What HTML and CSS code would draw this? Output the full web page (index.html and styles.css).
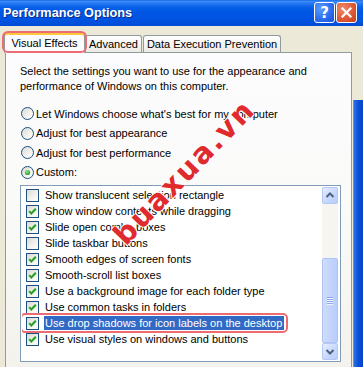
FILE: index.html
```html
<!DOCTYPE html>
<html>
<head>
<meta charset="utf-8">
<title>Performance Options</title>
<link rel="stylesheet" href="styles.css">
</head>
<body>
<svg class="defs" width="0" height="0" aria-hidden="true">
  <defs>
    <linearGradient id="ctl" x1="0" y1="0" x2="1" y2="1">
      <stop offset="0" stop-color="#D8D7CF"/>
      <stop offset="0.6" stop-color="#F4F3EE"/>
      <stop offset="1" stop-color="#FFFFFF"/>
    </linearGradient>
    <radialGradient id="dot" cx="0.4" cy="0.35" r="0.7">
      <stop offset="0" stop-color="#8BE58B"/>
      <stop offset="1" stop-color="#1E9A1E"/>
    </radialGradient>
  </defs>
</svg>
<div class="window">
  <div class="titlebar">
    <span class="title">Performance Options</span>
    <div class="caption-buttons">
      <span class="cbtn help">?</span>
      <span class="cbtn close"><svg width="13" height="13" viewBox="0 0 13 13"><path d="M2.5 2.5 L10.5 10.5 M10.5 2.5 L2.5 10.5" stroke="#fff" stroke-width="2.2" stroke-linecap="square"/></svg></span>
    </div>
  </div>
  <div class="client">
    <div class="tabs">
      <div class="tab active">Visual Effects</div>
      <div class="tab adv">Advanced</div>
      <div class="tab dep">Data Execution Prevention</div>
    </div>
    <div class="panel">
      <p class="intro">Select the settings you want to use for the appearance and<br>performance of Windows on this computer.</p>
      <ul class="radios">
        <li class="radio"><svg class="rb" width="13" height="13" viewBox="0 0 13 13"><circle cx="6.5" cy="6.5" r="6" fill="url(#ctl)" stroke="#1C5180"/></svg><span>Let Windows choose what's best for my computer</span></li>
        <li class="radio"><svg class="rb" width="13" height="13" viewBox="0 0 13 13"><circle cx="6.5" cy="6.5" r="6" fill="url(#ctl)" stroke="#1C5180"/></svg><span>Adjust for best appearance</span></li>
        <li class="radio"><svg class="rb" width="13" height="13" viewBox="0 0 13 13"><circle cx="6.5" cy="6.5" r="6" fill="url(#ctl)" stroke="#1C5180"/></svg><span>Adjust for best performance</span></li>
        <li class="radio"><svg class="rb" width="13" height="13" viewBox="0 0 13 13"><circle cx="6.5" cy="6.5" r="6" fill="url(#ctl)" stroke="#1C5180"/><circle cx="6.5" cy="6.5" r="2.6" fill="url(#dot)"/></svg><span>Custom:</span></li>
      </ul>
      <div class="listbox">
        <ul class="items">
          <li class="item"><svg class="cb" width="13" height="13" viewBox="0 0 13 13"><rect x="0.5" y="0.5" width="12" height="12" fill="url(#ctl)" stroke="#1C5180"/></svg><span class="label">Show translucent selection rectangle</span></li>
          <li class="item"><svg class="cb" width="13" height="13" viewBox="0 0 13 13"><rect x="0.5" y="0.5" width="12" height="12" fill="url(#ctl)" stroke="#1C5180"/><polyline points="3.2,6.2 5.3,8.5 9.8,3.8" fill="none" stroke="#21A121" stroke-width="2"/></svg><span class="label">Show window contents while dragging</span></li>
          <li class="item"><svg class="cb" width="13" height="13" viewBox="0 0 13 13"><rect x="0.5" y="0.5" width="12" height="12" fill="url(#ctl)" stroke="#1C5180"/><polyline points="3.2,6.2 5.3,8.5 9.8,3.8" fill="none" stroke="#21A121" stroke-width="2"/></svg><span class="label">Slide open combo boxes</span></li>
          <li class="item"><svg class="cb" width="13" height="13" viewBox="0 0 13 13"><rect x="0.5" y="0.5" width="12" height="12" fill="url(#ctl)" stroke="#1C5180"/></svg><span class="label">Slide taskbar buttons</span></li>
          <li class="item"><svg class="cb" width="13" height="13" viewBox="0 0 13 13"><rect x="0.5" y="0.5" width="12" height="12" fill="url(#ctl)" stroke="#1C5180"/><polyline points="3.2,6.2 5.3,8.5 9.8,3.8" fill="none" stroke="#21A121" stroke-width="2"/></svg><span class="label">Smooth edges of screen fonts</span></li>
          <li class="item"><svg class="cb" width="13" height="13" viewBox="0 0 13 13"><rect x="0.5" y="0.5" width="12" height="12" fill="url(#ctl)" stroke="#1C5180"/><polyline points="3.2,6.2 5.3,8.5 9.8,3.8" fill="none" stroke="#21A121" stroke-width="2"/></svg><span class="label">Smooth-scroll list boxes</span></li>
          <li class="item"><svg class="cb" width="13" height="13" viewBox="0 0 13 13"><rect x="0.5" y="0.5" width="12" height="12" fill="url(#ctl)" stroke="#1C5180"/><polyline points="3.2,6.2 5.3,8.5 9.8,3.8" fill="none" stroke="#21A121" stroke-width="2"/></svg><span class="label">Use a background image for each folder type</span></li>
          <li class="item"><svg class="cb" width="13" height="13" viewBox="0 0 13 13"><rect x="0.5" y="0.5" width="12" height="12" fill="url(#ctl)" stroke="#1C5180"/><polyline points="3.2,6.2 5.3,8.5 9.8,3.8" fill="none" stroke="#21A121" stroke-width="2"/></svg><span class="label">Use common tasks in folders</span></li>
          <li class="item selected"><svg class="cb" width="13" height="13" viewBox="0 0 13 13"><rect x="0.5" y="0.5" width="12" height="12" fill="url(#ctl)" stroke="#1C5180"/><polyline points="3.2,6.2 5.3,8.5 9.8,3.8" fill="none" stroke="#21A121" stroke-width="2"/></svg><span class="label">Use drop shadows for icon labels on the desktop</span></li>
          <li class="item"><svg class="cb" width="13" height="13" viewBox="0 0 13 13"><rect x="0.5" y="0.5" width="12" height="12" fill="url(#ctl)" stroke="#1C5180"/><polyline points="3.2,6.2 5.3,8.5 9.8,3.8" fill="none" stroke="#21A121" stroke-width="2"/></svg><span class="label">Use visual styles on windows and buttons</span></li>
        </ul>
        <div class="scrollbar">
          <div class="sb-btn"><svg width="14" height="15" viewBox="0 0 14 15"><path d="M3.5 9 L7 5.5 L10.5 9" fill="none" stroke="#4D6185" stroke-width="2"/></svg></div>
          <div class="sb-track"></div>
          <div class="sb-thumb"><svg width="8" height="8" viewBox="0 0 8 8"><path d="M1 0.5 H7 M1 2.5 H7 M1 4.5 H7 M1 6.5 H7" stroke="#8FA9E6" stroke-width="1"/><path d="M1 1.5 H7 M1 3.5 H7 M1 5.5 H7 M1 7.5 H7" stroke="#EEF3FE" stroke-width="1"/></svg></div>
          <div class="sb-btn"><svg width="14" height="15" viewBox="0 0 14 15"><path d="M3.5 6 L7 9.5 L10.5 6" fill="none" stroke="#4D6185" stroke-width="2"/></svg></div>
        </div>
      </div>
    </div>
    <div class="behind"></div>
  </div>
  <div class="watermark">buaxua.vn</div>
</div>
</body>
</html>
```
FILE: styles.css
```css
html, body {
  margin: 0;
  padding: 0;
}
body {
  width: 363px;
  height: 367px;
  overflow: hidden;
  background: #ECE9D8;
  font-family: "Liberation Sans", Arial, sans-serif;
  font-size: 11px;
  color: #000;
}
.defs {
  position: absolute;
}
.window {
  position: relative;
  width: 363px;
  height: 367px;
  display: flex;
  flex-direction: column;
  overflow: hidden;
}
.titlebar {
  flex: none;
  height: 26px;
  box-sizing: border-box;
  display: flex;
  align-items: center;
  justify-content: space-between;
  padding: 0 6px 1px 3px;
  background: linear-gradient(to bottom, #0A5DDF 0, #3C8EF8 1px, #2A7BF3 3px, #0862E8 7px, #0056E3 12px, #0053E0 20px, #004CD6 26px);
}
.title {
  color: #fff;
  font-weight: bold;
  font-size: 12.7px;
  text-shadow: 1px 1px 0 #0C2A8A;
}
.caption-buttons {
  display: flex;
  gap: 1px;
}
.cbtn {
  box-sizing: border-box;
  width: 21px;
  height: 21px;
  border: 1px solid #fff;
  border-radius: 3px;
  display: flex;
  align-items: center;
  justify-content: center;
}
.help {
  background: radial-gradient(circle at 30% 30%, #5A9BFF 0, #2D6FF0 55%, #1B4FD8 100%);
  color: #fff;
  font-weight: bold;
  font-size: 15px;
  font-family: "DejaVu Sans", sans-serif;
}
.close {
  background: radial-gradient(circle at 30% 30%, #F08A6A 0, #E05A36 55%, #C8401C 100%);
}
.client {
  position: relative;
  flex: 1;
  display: flex;
  flex-direction: column;
  padding-top: 6px;
}
.behind {
  position: absolute;
  right: 0;
  top: 74px;
  bottom: 0;
  width: 9px;
  border-left: 1px solid #7A8AA8;
  background: linear-gradient(to right, #2A6FE8, #0A4FD8 50%, #0543C8);
}
.tabs {
  position: relative;
  z-index: 1;
  height: 20px;
  display: flex;
  align-items: flex-end;
  padding-left: 4px;
}
.tab {
  box-sizing: border-box;
  height: 17px;
  border: 1px solid #919B9C;
  border-bottom: none;
  border-radius: 3px 3px 0 0;
  background: linear-gradient(to bottom, #FFFFFF, #ECEBE6);
  text-align: center;
  line-height: 16px;
}
.tab.active {
  position: relative;
  width: 81px;
  height: 21px;
  margin-bottom: -1px;
  background: #FCFCFE;
  border-top: 1px solid #E68B2C;
  box-shadow: inset 0 2px 0 #FFC73C;
  line-height: 20px;
}
.tab.active::after {
  content: "";
  position: absolute;
  left: -3px;
  right: -3px;
  top: -2px;
  bottom: 0;
  border: 2px solid #EB6D73;
  border-radius: 6px;
}
.tab.adv {
  width: 57px;
}
.tab.dep {
  width: 138px;
  margin-left: 1px;
}
.panel {
  flex: 1;
  box-sizing: border-box;
  width: 347px;
  margin-left: 5px;
  border: 1px solid #919B9C;
  border-bottom: none;
  background: linear-gradient(to bottom, #FCFCFE 0, #FAFAF8 50%, #F3F2EC 100%);
  padding: 11px 0 0 14px;
}
.intro {
  margin: 0;
  line-height: 15px;
}
.radios {
  list-style: none;
  margin: 10px 0 0 0;
  padding: 0 0 0 1px;
}
.radio {
  height: 19.5px;
  display: flex;
  align-items: center;
  gap: 2px;
}
.rb {
  flex: none;
}
.listbox {
  box-sizing: border-box;
  width: 321px;
  height: 177px;
  margin-top: 3px;
  border: 1px solid #7F9DB9;
  background: #fff;
  padding: 1px;
  display: flex;
}
.items {
  flex: 1;
  list-style: none;
  margin: 0;
  padding: 0;
  overflow: hidden;
}
.item {
  position: relative;
  height: 16px;
  display: flex;
  align-items: center;
  padding-left: 4px;
  white-space: nowrap;
}
.cb {
  flex: none;
  margin-right: 5px;
}
.label {
  line-height: 14px;
  padding: 0 2px 0 1px;
}
.item.selected .label {
  background: #316AC5;
  color: #fff;
}
.item.selected::after {
  content: "";
  position: absolute;
  left: -2px;
  top: -2px;
  width: 264px;
  height: 16px;
  border: 2px solid #EB6D73;
  border-radius: 5px;
}
.scrollbar {
  flex: none;
  width: 16px;
  margin-right: 1px;
  display: flex;
  flex-direction: column;
  background: #F6F5F0;
}
.sb-btn {
  box-sizing: border-box;
  height: 17px;
  border: 1px solid #B4C8F6;
  border-radius: 2px;
  background: linear-gradient(135deg, #E6EEFE 0, #C6D7FC 60%, #B8CDFA 100%);
  display: flex;
  align-items: center;
  justify-content: center;
}
.sb-track {
  flex: 1;
}
.sb-thumb {
  box-sizing: border-box;
  height: 85px;
  border: 1px solid #AFC4F4;
  border-radius: 2px;
  background: linear-gradient(to right, #CFDDFC 0, #C3D4FC 50%, #BACDFA 100%);
  display: flex;
  align-items: center;
  justify-content: center;
}
.watermark {
  position: absolute;
  left: 184px;
  top: 172px;
  transform: translate(-50%, -50%) rotate(-46deg);
  font-family: "DejaVu Sans", sans-serif;
  font-weight: bold;
  font-size: 29px;
  letter-spacing: 2px;
  color: #DF2A2E;
  text-shadow: 1px 0 0 #fff, -1px 0 0 #fff, 0 1px 0 #fff, 0 -1px 0 #fff;
  white-space: nowrap;
  pointer-events: none;
}
```
